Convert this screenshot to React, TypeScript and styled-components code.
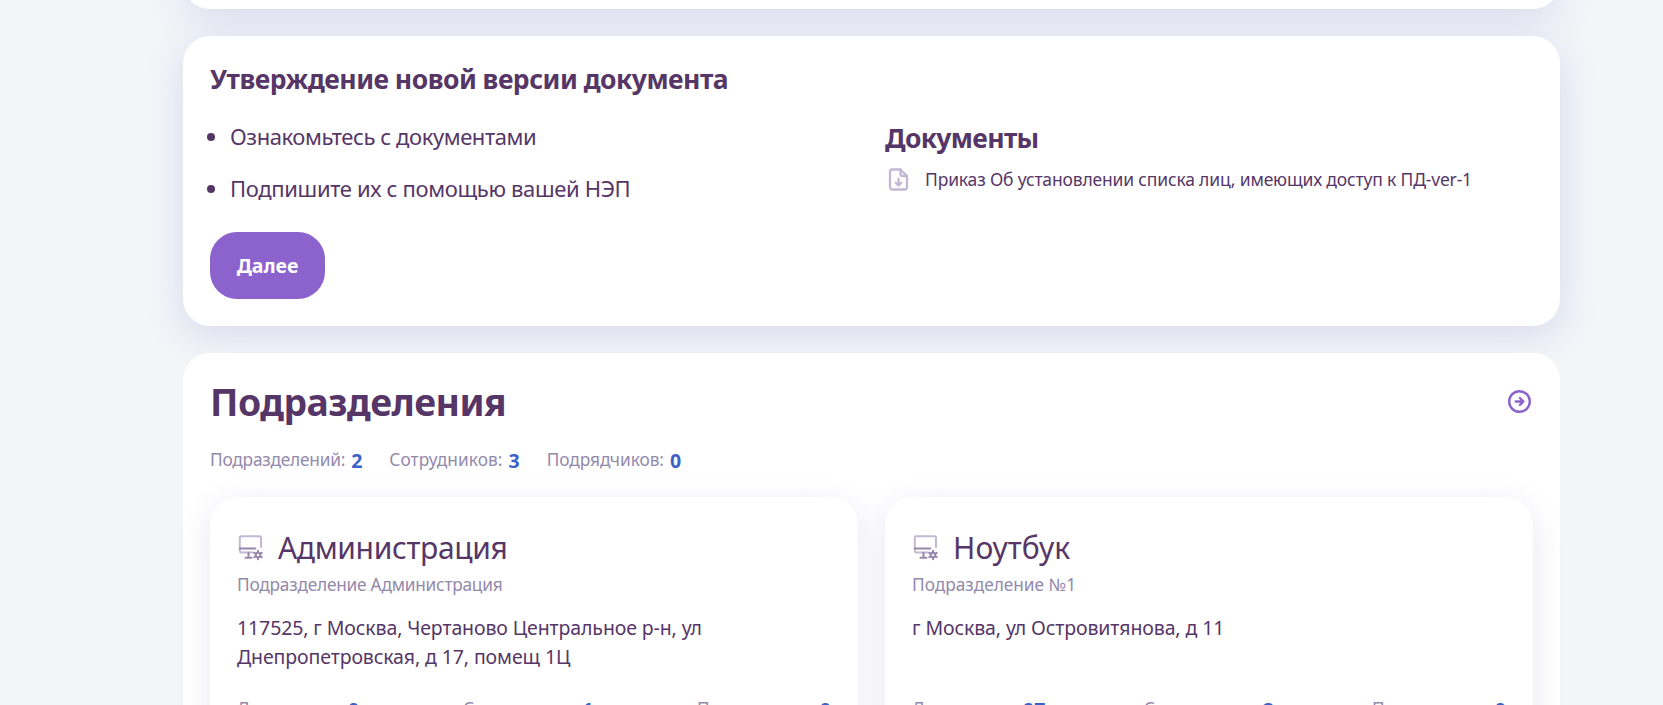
import React from "react";
import styled, { createGlobalStyle } from "styled-components";

const GlobalStyle = createGlobalStyle`
  *, *::before, *::after { box-sizing: border-box; }
  body {
    margin: 0;
    background: #f2f6f9;
    color: #563667;
    font-family: "Segoe UI", "Noto Sans", "Open Sans", sans-serif;
  }
  h1, h2, h3, p, ul { margin: 0; padding: 0; }
`;

const Page = styled.main`
  display: flex;
  flex-direction: column;
  gap: 27px;
  height: 100vh;
  padding: 0 103px 0 183px;
  overflow: hidden;
`;

const Panel = styled.section<{ $raised?: boolean }>`
  flex: none;
  padding: 27px;
  border-radius: 27px;
  background: #fff;
  box-shadow: ${(p) => (p.$raised ? "0 9px 36px rgba(128, 118, 192, 0.22)" : "none")};
`;

const PanelEnd = styled.div`
  flex: none;
  height: 36px;
  margin-top: -27px;
  border-radius: 0 0 27px 27px;
  background: #fff;
  box-shadow: 0 9px 36px rgba(128, 118, 192, 0.22);
`;

const PanelTitle = styled.h2`
  font-size: 26.5px;
  font-weight: 700;
  line-height: 32px;
  letter-spacing: -0.51px;
`;

const Columns = styled.div<{ $top: number }>`
  display: grid;
  grid-template-columns: 1fr 1fr;
  gap: 27px;
  margin-top: ${(p) => p.$top}px;
`;

const Steps = styled.ul`
  display: flex;
  flex-direction: column;
  gap: 22px;
  list-style: none;
`;

const Step = styled.li<{ $spacing: number }>`
  display: flex;
  align-items: center;
  gap: 15px;
  margin-left: -3px;
  font-size: 22px;
  line-height: 28px;
  padding-bottom: 2px;
  letter-spacing: ${(p) => p.$spacing}px;

  &::before {
    content: "";
    width: 8px;
    height: 8px;
    border-radius: 50%;
    background: currentColor;
    transform: translateY(1px);
  }
`;

const PrimaryButton = styled.button`
  display: block;
  width: 115px;
  height: 67px;
  margin-top: 28px;
  padding: 0;
  border: 0;
  border-radius: 27px;
  background: #8c63cd;
  color: #fff;
  font: 700 19.5px/27px "Segoe UI", "Noto Sans", sans-serif;
`;

const DocumentsTitle = styled.h3`
  font-size: 26.5px;
  font-weight: 700;
  line-height: 32px;
  letter-spacing: -0.66px;
`;

const DocumentLink = styled.div`
  display: flex;
  align-items: center;
  gap: 13px;
  margin-top: 11px;
  font-size: 17.5px;
  line-height: 28px;
  letter-spacing: -0.17px;
  white-space: nowrap;
`;

const Icon = styled.svg`
  flex: none;
  width: 27px;
  height: 27px;
  fill: none;
  stroke-linecap: round;
  stroke-linejoin: round;
`;

const SectionHeader = styled.header`
  display: flex;
  align-items: center;
  justify-content: space-between;
`;

const SectionTitle = styled.h1`
  font-size: 37.3px;
  font-weight: 700;
  line-height: 43px;
  letter-spacing: -0.52px;
`;

const Summary = styled.div`
  display: flex;
  gap: 27px;
  height: 27px;
  margin-top: 24px;
`;

const StatItem = styled.div`
  display: flex;
  align-items: flex-start;
  gap: 6px;
`;

const StatLabel = styled.span<{ $spacing: number }>`
  color: #9389ab;
  font-size: 17.3px;
  line-height: 25px;
  letter-spacing: ${(p) => p.$spacing}px;
`;

const StatValue = styled.span`
  color: #3c62c8;
  font-size: 19.5px;
  font-weight: 700;
  line-height: 28px;
`;

const UnitCard = styled.article`
  padding: 27px;
  border-radius: 27px;
  background: #fff;
  box-shadow: 0 9px 30px rgba(124, 120, 190, 0.18);
`;

const UnitHeader = styled.header`
  display: flex;
  align-items: center;
  gap: 14px;
`;

const UnitName = styled.h2<{ $spacing: number }>`
  padding-top: 1px;
  font-size: 30px;
  font-weight: 400;
  line-height: 46px;
  letter-spacing: ${(p) => p.$spacing}px;
`;

const UnitCaption = styled.p<{ $spacing: number }>`
  margin-top: 2px;
  color: #9389ab;
  font-size: 17.3px;
  line-height: 24px;
  letter-spacing: ${(p) => p.$spacing}px;
`;

const UnitAddress = styled.p`
  min-height: 58px;
  max-width: 500px;
  margin-top: 16px;
  font-size: 19.5px;
  line-height: 29px;
  letter-spacing: -0.11px;
`;

const UnitStats = styled.div`
  display: flex;
  justify-content: space-between;
  margin-top: 25px;
`;

const FileDownloadIcon = () => (
  <Icon viewBox="0 0 27 27" stroke="#c2b8d3" strokeWidth="2.3">
    <path d="M15.5 3.5H7.3a2.3 2.3 0 0 0-2.3 2.3v15.4a2.3 2.3 0 0 0 2.3 2.3h12.4a2.3 2.3 0 0 0 2.3-2.3V10z" />
    <path d="M15.5 3.5V8a2 2 0 0 0 2 2H22" />
    <path d="M13.5 12.7v6.6M10.8 16.8l2.7 2.7 2.7-2.7" />
  </Icon>
);

const ArrowCircleIcon = () => (
  <Icon viewBox="0 0 27 27" stroke="#8c63cd" strokeWidth="2.4">
    <circle cx="13.5" cy="13.5" r="10.3" />
    <path d="M9.8 13.5h7.2M13.9 10l3.5 3.5-3.5 3.5" />
  </Icon>
);

const WorkstationIcon = () => (
  <Icon viewBox="0 0 27 27" strokeWidth="2">
    <path
      d="M16 18.5H4.8A2 2 0 0 1 2.8 16.5V3.8a1.6 1.6 0 0 1 1.6-1.6h18.2a1.4 1.4 0 0 1 1.4 1.4v9.5"
      stroke="#c2b8d3"
    />
    <path d="M2.8 14.4h15.5M11.5 18.8v4.5M8.5 23.7h6" stroke="#9a86ab" />
    <circle cx="21" cy="21" r="2.3" stroke="#9a86ab" />
    <path
      d="M21 16.7v1.8M21 23.5v1.8M17.3 18.85l1.5.9M23.2 22.25l1.5.9M17.3 23.15l1.5-.9M23.2 19.75l1.5-.9"
      stroke="#9a86ab"
    />
  </Icon>
);

const Stat = ({ label, value, spacing }: { label: string; value: number; spacing: number }) => (
  <StatItem>
    <StatLabel $spacing={spacing}>{label}:</StatLabel>
    <StatValue>{value}</StatValue>
  </StatItem>
);

const units = [
  {
    name: "Администрация",
    nameSpacing: -0.35,
    caption: "Подразделение Администрация",
    captionSpacing: -0.23,
    address: "117525, г Москва, Чертаново Центральное р-н, ул Днепропетровская, д 17, помещ 1Ц",
    documents: 0,
    employees: 1,
    contractors: 0,
  },
  {
    name: "Ноутбук",
    nameSpacing: 0.1,
    caption: "Подразделение №1",
    captionSpacing: -0.02,
    address: "г Москва, ул Островитянова, д 11",
    documents: 97,
    employees: 2,
    contractors: 0,
  },
];

export default function App() {
  return (
    <>
      <GlobalStyle />
      <Page>
        <PanelEnd />
        <Panel $raised>
          <PanelTitle>Утверждение новой версии документа</PanelTitle>
          <Columns $top={27}>
            <div>
              <Steps>
                <Step $spacing={-0.42}>Ознакомьтесь с документами</Step>
                <Step $spacing={-0.35}>Подпишите их с помощью вашей НЭП</Step>
              </Steps>
              <PrimaryButton>Далее</PrimaryButton>
            </div>
            <div>
              <DocumentsTitle>Документы</DocumentsTitle>
              <DocumentLink>
                <FileDownloadIcon />
                Приказ Об установлении списка лиц, имеющих доступ к ПД-ver-1
              </DocumentLink>
            </div>
          </Columns>
        </Panel>
        <Panel>
          <SectionHeader>
            <SectionTitle>Подразделения</SectionTitle>
            <ArrowCircleIcon />
          </SectionHeader>
          <Summary>
            <Stat label="Подразделений" value={2} spacing={-0.22} />
            <Stat label="Сотрудников" value={3} spacing={0.07} />
            <Stat label="Подрядчиков" value={0} spacing={-0.06} />
          </Summary>
          <Columns $top={23}>
            {units.map((unit) => (
              <UnitCard key={unit.name}>
                <UnitHeader>
                  <WorkstationIcon />
                  <UnitName $spacing={unit.nameSpacing}>{unit.name}</UnitName>
                </UnitHeader>
                <UnitCaption $spacing={unit.captionSpacing}>{unit.caption}</UnitCaption>
                <UnitAddress>{unit.address}</UnitAddress>
                <UnitStats>
                  <Stat label="Документов" value={unit.documents} spacing={-0.15} />
                  <Stat label="Сотрудников" value={unit.employees} spacing={0.05} />
                  <Stat label="Подрядчиков" value={unit.contractors} spacing={-0.1} />
                </UnitStats>
              </UnitCard>
            ))}
          </Columns>
        </Panel>
      </Page>
    </>
  );
}
